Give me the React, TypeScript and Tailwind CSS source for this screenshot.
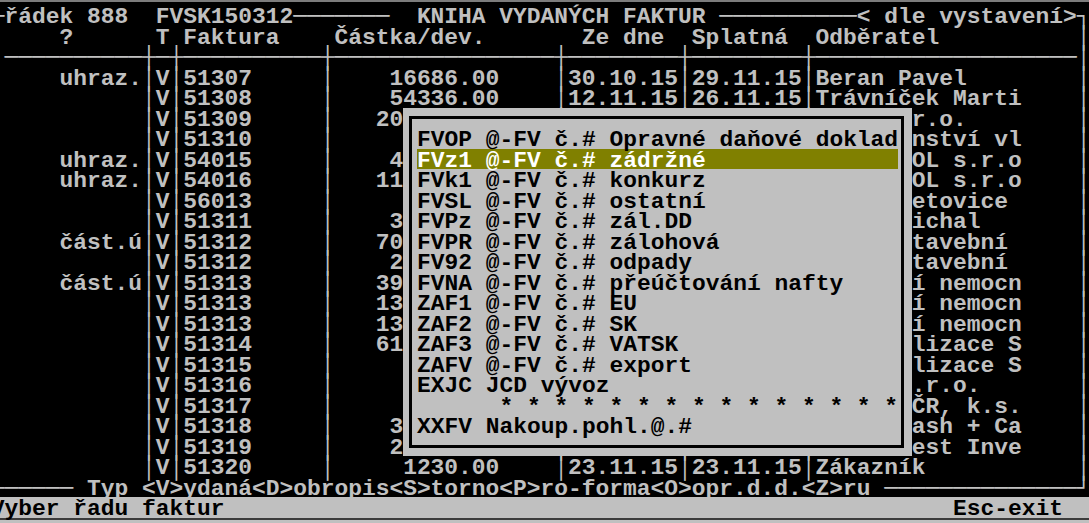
const COLS = 80;

type Invoice = {
  status: string;
  number: string;
  amount: string;
  issued: string;
  due: string;
  customer: string;
};

const invoices: Invoice[] = [
  { status: "uhraz.", number: "51307", amount: "16686.00", issued: "30.10.15", due: "29.11.15", customer: "Beran Pavel" },
  { status: "", number: "51308", amount: "54336.00", issued: "12.11.15", due: "26.11.15", customer: "Trávníček Martin" },
  { status: "", number: "51309", amount: "204518.00", issued: "12.11.15", due: "26.11.15", customer: "Kovo s.r.o." },
  { status: "", number: "51310", amount: "8470.00", issued: "13.11.15", due: "27.11.15", customer: "Společenství vlastníků" },
  { status: "uhraz.", number: "54015", amount: "41250.00", issued: "13.11.15", due: "27.11.15", customer: "SPORTPROL s.r.o." },
  { status: "uhraz.", number: "54016", amount: "115000.00", issued: "16.11.15", due: "30.11.15", customer: "SPORTPROL s.r.o." },
  { status: "", number: "56013", amount: "6050.00", issued: "16.11.15", due: "30.11.15", customer: "Město Letovice" },
  { status: "", number: "51311", amount: "36300.00", issued: "17.11.15", due: "01.12.15", customer: "Novák Michal" },
  { status: "část.ú", number: "51312", amount: "700120.00", issued: "17.11.15", due: "01.12.15", customer: "Firma stavební" },
  { status: "", number: "51312", amount: "24200.00", issued: "17.11.15", due: "01.12.15", customer: "Firma stavební" },
  { status: "část.ú", number: "51313", amount: "393250.00", issued: "18.11.15", due: "02.12.15", customer: "Oblastní nemocnice" },
  { status: "", number: "51313", amount: "130680.00", issued: "18.11.15", due: "02.12.15", customer: "Oblastní nemocnice" },
  { status: "", number: "51313", amount: "133100.00", issued: "18.11.15", due: "02.12.15", customer: "Oblastní nemocnice" },
  { status: "", number: "51314", amount: "610500.00", issued: "19.11.15", due: "03.12.15", customer: "Elektrolizace Sever" },
  { status: "", number: "51315", amount: "9680.00", issued: "19.11.15", due: "03.12.15", customer: "Elektrolizace Sever" },
  { status: "", number: "51316", amount: "7865.00", issued: "20.11.15", due: "04.12.15", customer: "Tesko s.r.o." },
  { status: "", number: "51317", amount: "5445.00", issued: "20.11.15", due: "04.12.15", customer: "Správa ČR, k.s." },
  { status: "", number: "51318", amount: "36784.00", issued: "20.11.15", due: "04.12.15", customer: "Makro Cash + Carry" },
  { status: "", number: "51319", amount: "21780.00", issued: "23.11.15", due: "07.12.15", customer: "ORION Best Invest" },
  { status: "", number: "51320", amount: "1230.00", issued: "23.11.15", due: "23.11.15", customer: "Zákazník" },
];

const series = [
  "FVOP @-FV č.# Opravné daňové doklad",
  "FVz1 @-FV č.# zádržné",
  "FVk1 @-FV č.# konkurz",
  "FVSL @-FV č.# ostatní",
  "FVPz @-FV č.# zál.DD",
  "FVPR @-FV č.# zálohová",
  "FV92 @-FV č.# odpady",
  "FVNA @-FV č.# přeúčtování nafty",
  "ZAF1 @-FV č.# EU",
  "ZAF2 @-FV č.# SK",
  "ZAF3 @-FV č.# VATSK",
  "ZAFV @-FV č.# export",
  "EXJC JCD vývoz",
  "      * * * * * * * * * * * * * * *",
  "XXFV Nakoup.pohl.@.#",
];

// places text pieces on an 80 column text line
const put = (parts: [number, string][]) => {
  const cells = Array<string>(COLS).fill(" ");
  parts.forEach(([col, text]) => {
    Array.from(text).forEach((ch, i) => {
      if (col + i < COLS) cells[col + i] = ch;
    });
  });
  return cells.join("");
};

const rep = (ch: string, n: number) => ch.repeat(n);

const invoiceLine = (inv: Invoice) =>
  put([
    [0, "│"],
    [5, inv.status],
    [11, "│"],
    [12, "V"],
    [13, "│"],
    [14, inv.number],
    [24, "│"],
    [37 - inv.amount.length, inv.amount],
    [41, "│"],
    [42, inv.issued],
    [50, "│"],
    [51, inv.due],
    [59, "│"],
    [60, Array.from(inv.customer).slice(0, 15).join("")],
    [79, "│"],
  ]);

const lines = [
  put([
    [0, "┌"],
    [1, "řádek 888"],
    [12, "FVSK150312"],
    [22, rep("─", 7)],
    [31, "KNIHA VYDANÝCH FAKTUR"],
    [53, rep("─", 10)],
    [63, "< dle vystavení>"],
    [79, "┐"],
  ]),
  put([
    [0, "│"],
    [5, "?"],
    [12, "T"],
    [14, "Faktura"],
    [25, "Částka/dev."],
    [43, "Ze dne"],
    [51, "Splatná"],
    [60, "Odběratel"],
    [79, "│"],
  ]),
  put([
    [0, "│"],
    [1, rep("─", 78)],
    [11, "┼"],
    [13, "┼"],
    [24, "┼"],
    [41, "┼"],
    [50, "┼"],
    [59, "┼"],
    [79, "│"],
  ]),
  ...invoices.map(invoiceLine),
  put([
    [0, "└"],
    [1, rep("─", 5)],
    [7, "Typ"],
    [11, "<V>ydaná<D>obropis<S>torno<P>ro-forma<O>opr.d.d.<Z>ru"],
    [65, rep("─", 14)],
    [79, "┘"],
  ]),
];

const statusLine = put([
  [0, "Vyber řadu faktur"],
  [70, "Esc-exit"],
]);

const SeriesMenu = () => (
  <div className="absolute left-[412.5px] top-[102.5px] w-[508.75px] h-[348.5px] bg-[#c0c0c0] text-black">
    <div className="absolute left-[5.4px] top-[8.75px] right-[8px] bottom-[8.6px] border-[3px] border-black" />
    <div className="relative pl-[13.75px] pt-[20.5px]">
      {series.map((item, i) => (
        <div
          key={i}
          className={`h-[20.5px] w-[481.25px] pt-[2px] whitespace-pre ${
            i === 1 ? "bg-[#808000] text-white" : ""
          }`}
        >
          {item}
        </div>
      ))}
    </div>
  </div>
);

export default function App() {
  return (
    <div className="w-[1089px] h-[523px] overflow-hidden bg-black flex flex-col">
      <div className="h-[2px] shrink-0 bg-[#7c7c7c]" />
      <div className="relative shrink-0 w-[1100px] ml-[-9.25px] mt-[3.1px] font-['Liberation_Mono','DejaVu_Sans_Mono',monospace] font-bold text-[22.92px] leading-[20.5px] text-[#c0c0c0]">
        {lines.map((line, i) => (
          <div key={i} className="h-[20.5px] pt-[2px] whitespace-pre">
            {line}
          </div>
        ))}
        <div className="h-[20.5px] pt-[2px] whitespace-pre bg-[#c0c0c0] text-black">
          {statusLine}
        </div>
        <SeriesMenu />
      </div>
      <div className="h-[2.4px] shrink-0 bg-[#3c3c3c]" />
      <div className="flex-1 bg-[#c0c0c0]" />
    </div>
  );
}
